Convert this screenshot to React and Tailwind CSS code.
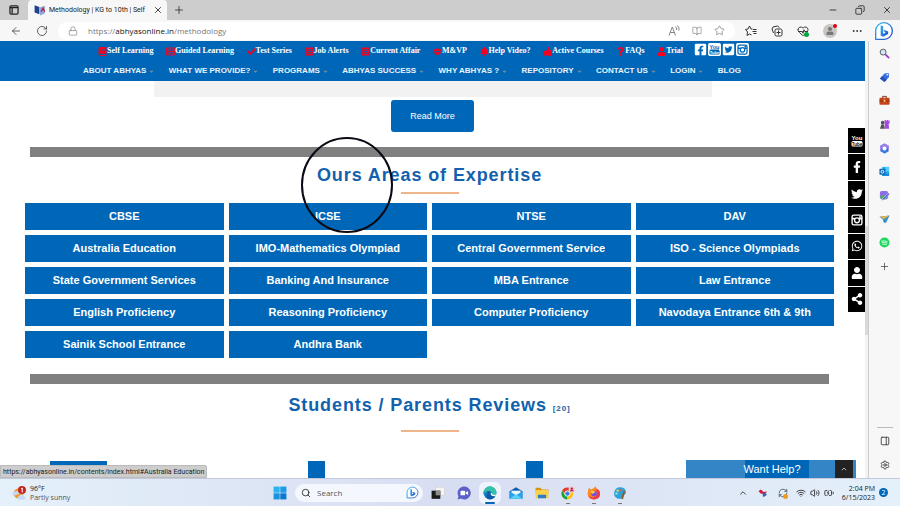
import React from "react";
import {
  FaBook, FaRegListAlt, FaListAlt, FaCheck, FaUsers, FaBell, FaThumbsUp, FaQuestion, FaUser,
  FaFacebookSquare, FaTwitterSquare, FaFacebookF, FaTwitter, FaWhatsapp, FaShareAlt, FaCaretDown,
} from "react-icons/fa";
import {
  ArrowLeft, RotateCw, Lock, X, Plus, Minus, Copy, Star, Ellipsis, ChevronUp, Wifi, Volume2,
  BatteryCharging, Search, Settings, PanelRight, BookOpen, HeartPulse, RefreshCw,
} from "lucide-react";

const ui = "font-['Open_Sans','Noto_Sans',sans-serif]";
const arial = "font-['Liberation_Sans',Arial,sans-serif]";

const topLinks = [
  ["Self Learning", FaBook], ["Guided Learning", FaRegListAlt], ["Test Series", FaCheck],
  ["Job Alerts", FaListAlt], ["Current Affair", FaListAlt], ["M&VP", FaUsers],
  ["Help Video?", FaBell], ["Active Courses", FaThumbsUp], ["FAQs", FaQuestion], ["Trial", FaUser],
];

const menu = [
  "ABOUT ABHYAS", "WHAT WE PROVIDE?", "PROGRAMS", "ABHYAS SUCCESS", "WHY ABHYAS ?",
  "REPOSITORY", "CONTACT US", "LOGIN", "BLOG",
];

const areas = [
  "CBSE", "ICSE", "NTSE", "DAV",
  "Australia Education", "IMO-Mathematics Olympiad", "Central Government Service", "ISO - Science Olympiads",
  "State Government Services", "Banking And Insurance", "MBA Entrance", "Law Entrance",
  "English Proficiency", "Reasoning Proficiency", "Computer Proficiency", "Navodaya Entrance 6th & 9th",
  "Sainik School Entrance", "Andhra Bank",
];

function YouTubeStack({ className, ink = "fill-black" }) {
  return (
    <svg viewBox="0 0 24 24" className={`${className} font-['Liberation_Sans_Narrow','Liberation_Sans',sans-serif] font-bold`} fill="currentColor" textAnchor="middle" aria-hidden="true">
      <text x="12" y="10" fontSize="12">You</text>
      <rect x="1" y="12" width="22" height="11" rx="3" />
      <text x="12" y="21" fontSize="9" className={ink}>Tube</text>
    </svg>
  );
}

function Camera({ className }) {
  return (
    <svg viewBox="1 1 22 22" className={className} fill="none" stroke="currentColor" aria-hidden="true">
      <rect x="3" y="3" width="18" height="18" rx="3" strokeWidth="2.500" />
      <circle cx="12" cy="12.500" r="4.500" strokeWidth="2.500" />
      <path d="M3 9.500h5M16 9.500h5" strokeWidth="3" />
      <rect x="16" y="5" width="3" height="3" fill="currentColor" stroke="none" />
    </svg>
  );
}

function Bing({ className }) {
  return (
    <svg viewBox="0 0 24 24" className={className} aria-hidden="true">
      <defs>
        <linearGradient id="bing" x1="0" y1="0" x2="1" y2="1">
          <stop offset="0" stopColor="#35b5ee" />
          <stop offset="1" stopColor="#1b48c7" />
        </linearGradient>
      </defs>
      <path d="M2 22V12A10 10 0 1 1 12 22z" fill="#fff" stroke="url(#bing)" strokeWidth="1.600" strokeLinejoin="round" />
      <path d="M8 5l3 1.300v9.200l3-1.700-1.600-.8-1-2.500 5.600 2v3.200L11 19l-3-1.700z" fill="url(#bing)" />
    </svg>
  );
}

function SideIcon({ kind }) {
  const art = {
    search: <><path d="M14 14l7 7" stroke="#a33ad0" strokeWidth="4" strokeLinecap="round" /><circle cx="9" cy="9" r="6.500" fill="#cfe6f5" stroke="#555" strokeWidth="2" /></>,
    tag: <><path d="M12 3l9-1 1 9-10 11L2 14z" fill="#3a6fe0" /><path d="M2 14l5-5 10 8-5 5z" fill="#2450b8" /><circle cx="18" cy="6" r="1.800" fill="#fff" /></>,
    case: <><path d="M8 7V3h8v4" fill="none" stroke="#6b2f14" strokeWidth="2" /><rect x="1" y="6" width="22" height="15" rx="2" fill="#c4441c" /><path d="M1 12h22v2H1z" fill="#8b2b10" /><rect x="10" y="10" width="4" height="5" fill="#f5c070" /></>,
    games: <><circle cx="8" cy="8" r="4" fill="#555" /><path d="M5 12h6l2 9H2z" fill="#555" /><path d="M12 2h3v2h2V2h3v2h2V2h1v7l-2 2 1 10h-9z" fill="#a34be0" /></>,
    office: <><path d="M12 1l9 5v12l-9 5-9-5V6z" fill="#5a5fe0" /><path d="M12 1l9 5v6l-9-4-9 6V6z" fill="#9a7ff0" /><path d="M3 14l9 9 9-5-8-2z" fill="#2c8be0" /><circle cx="12" cy="12" r="4.500" fill="#fff" /></>,
    outlook: <><path d="M7 2h15v19H7z" fill="#28a8ea" /><path d="M14 2h8v10h-8z" fill="#50d0ff" /><path d="M7 14l8 4 7-4v8H7z" fill="#1490df" /><rect x="1" y="6" width="13" height="13" rx="1" fill="#0f6cbd" /><circle cx="7.500" cy="12.500" r="3" fill="none" stroke="#fff" strokeWidth="2" /></>,
    image: <><rect x="2" y="2" width="18" height="18" rx="4" fill="#8f6be8" /><path d="M2 16l8-7 7 11H5z" fill="#4ab54a" /><path d="M21 6l2 3-12 12-5 2 2-5z" fill="#4e67d8" stroke="#f7f7f7" /></>,
    send: <><path d="M1 6l22-3-8 17-4-6z" fill="#2f95dc" /><path d="M1 6l22-3-12 8z" fill="#efb13c" /><path d="M9 12l2 8 3-4z" fill="#176bb0" /></>,
    spotify: <><circle cx="12" cy="12" r="11" fill="#1ed760" /><path d="M6 9c4-1 9-.5 12 1.500M7 12.500c4-1 7-.3 10 1M8 16c3-.7 6-.2 8 .8" fill="none" stroke="#fff" strokeWidth="1.800" strokeLinecap="round" /></>,
  }[kind];
  return <svg viewBox="0 0 24 24" className="size-[11px]" fill="none" aria-hidden="true">{art}</svg>;
}

function TaskIcon({ kind }) {
  const art = {
    windows: <><path d="M1 1h10.500v10.500H1z" fill="#2bb3ee" /><path d="M12.500 1H23v10.500H12.500z" fill="#1c9be6" /><path d="M1 12.500h10.500V23H1z" fill="#1793e0" /><path d="M12.500 12.500H23V23H12.500z" fill="#0a78d1" /></>,
    desk: <><rect x="8" y="2" width="15" height="14" fill="#f5f5f5" stroke="#ccc" /><rect x="1" y="8" width="15" height="14" fill="#1b1b1b" /><path d="M8 8h8v8H8z" fill="#8d8d8d" /></>,
    chat: <><path d="M12 1a11 11 0 1 1-5 20.500L1 23l1.500-5.500A11 11 0 0 1 12 1z" fill="#5b5fc7" /><rect x="6" y="8" width="8" height="8" rx="1.500" fill="#fff" /><path d="M15 11l4-2.500v7L15 13z" fill="#fff" /></>,
    edge: <><circle cx="12" cy="12" r="11" fill="#1576c8" /><path d="M1 12A11 11 0 0 1 23 11c0 4-3 5.500-6 5.500-2 0-3-1-2-2.500 1-2-.5-5-4-5S3 11 1 14z" fill="#35c1a8" /><path d="M1 12c2-5 13-5 13 1-1 2 0 4 5 3.500l3-1.500C20 20 15 24 10 22.500c-6-2-5-9 0-11C6 8 2 9 1 14z" fill="#0c59a4" /><path d="M14 12c0 3 2 4.500 5 4.500l3-1.200" fill="none" stroke="#fff" strokeWidth="2" /></>,
    mail: <><path d="M1 9l11-7 11 7v13H1z" fill="#0f5ea8" /><path d="M4 8h16v8H4z" fill="#e9f6ff" /><path d="M1 9l11 7 11-7v13H1z" fill="#28a3e8" /><path d="M1 22l11-8 11 8z" fill="#5fd0fa" /></>,
    folder: <><path d="M1 3h8l3 3h11v6H1z" fill="#d9940f" /><rect x="1" y="7" width="22" height="14" rx="1" fill="#fbd04b" /><path d="M5 15h14v6H5z" fill="#2a7fc9" /></>,
    chrome: <><circle cx="11" cy="13" r="10" fill="#fbc116" /><path d="M2 8a10 10 0 0 1 18 0h-9a5 5 0 0 0-5 5z" fill="#e33b2e" /><path d="M2 8l5 8 4 2-1 5A10 10 0 0 1 2 8z" fill="#1fa34a" /><circle cx="11" cy="13" r="4.500" fill="#3b7ded" stroke="#fff" strokeWidth="1.500" /><circle cx="18.500" cy="6" r="5.500" fill="#f4c8d4" /><circle cx="18.500" cy="4.500" r="2" fill="#9b1f45" /><path d="M15 9c0-3 7-3 7 0z" fill="#9b1f45" /></>,
    firefox: <><path d="M12 3c2-1 2-2 3-2 0 3 3 4 5 6 6 8 0 16-8 16S-1 17 2 8c0-2 1-4 2-5l2 3c2-1 4-1 6-3z" fill="#ff8a1e" /><path d="M20 7c6 8 0 16-8 16-5 0-9-3-10-7 4 5 14 5 15-2 1-4-2-6-2-9z" fill="#f0384b" /><circle cx="12" cy="13" r="5" fill="#7c4be0" /><path d="M6 9c4-2 7 0 8 2-3 0-3 3-6 2z" fill="#ffd23e" /></>,
    paint: <><path d="M12 2c7 0 11 4 10 10-1 4-5 2-6 5s0 5-4 5C5 22 1 17 2 11s5-9 10-9z" fill="#2ea3d8" /><circle cx="8" cy="8" r="2" fill="#f5d33c" /><circle cx="14" cy="7" r="2" fill="#ef5c4a" /><circle cx="6" cy="13" r="2" fill="#8fe0ff" /><path d="M18 8l3 1-4 14-3-2z" fill="#8a5a35" /></>,
  }[kind];
  return <svg viewBox="0 0 24 24" className="size-3.5" fill="none" aria-hidden="true">{art}</svg>;
}

function TabBar() {
  return (
    <div className="flex h-5 shrink-0 items-stretch bg-[#cdcdcd] text-[#222]">
      <div className="flex w-7 items-center justify-center">
        <svg viewBox="0 0 16 16" className="size-2.5" fill="none" stroke="#222" strokeWidth="2" aria-hidden="true"><rect x="1.500" y="1.500" width="13" height="13" rx="2" /><path d="M1.500 4h13M5 4v10" /></svg>
      </div>
      <div className="flex items-center rounded-t bg-[#f7f7f7] px-1">
        <svg viewBox="0 0 20 18" className="mx-0.5 size-3 shrink-0" aria-hidden="true"><path d="M1 1l8 3v12l-8-3z" fill="#203f8f" /><path d="M10 5l8-3v13l-8 3z" fill="#90a6d5" /><path d="M12 12l3-6 3 6" stroke="#b02340" strokeWidth="2" fill="none" /></svg>
        <span className="ml-px w-[104px] font-['Roboto',sans-serif] text-[7px] whitespace-nowrap text-[#222]">Methodology | KG to 10th | Self</span>
        <button aria-label="Close tab"><X className="size-2.5" /></button>
      </div>
      <button aria-label="New tab" className="ml-1.5"><Plus className="size-3" strokeWidth={1.5} /></button>
      <div className="ml-auto flex items-center gap-[17px] pr-2">
        <button aria-label="Minimize"><Minus className="size-2.5" /></button>
        <button aria-label="Restore"><Copy className="size-2.5 -scale-x-100" /></button>
        <button aria-label="Close"><X className="size-2.5" /></button>
      </div>
    </div>
  );
}

function AddressBar() {
  return (
    <div className="flex h-[21px] shrink-0 items-center bg-[#f7f7f7] text-[#333]">
      <button aria-label="Back" className="ml-2.5"><ArrowLeft className="size-3" strokeWidth={1.5} /></button>
      <button aria-label="Refresh" className="ml-3.5"><RotateCw className="size-3" strokeWidth={1.5} /></button>
      <div className="ml-2.5 flex h-[18px] flex-1 items-center rounded-full bg-white pr-2.5 pl-2.5 text-[#777]">
        <Lock className="size-2.5" strokeWidth={1.5} />
        <div className="ml-2.5 flex-1 text-[8px] whitespace-nowrap">https://<span className="text-[#111]">abhyasonline.in</span>/methodology</div>
        <div className="flex items-center gap-3">
          <button aria-label="Read aloud" className="flex"><svg viewBox="0 0 24 24" className="size-3" fill="none" stroke="currentColor" strokeWidth="1.800" aria-hidden="true"><path d="M2 21L8.500 4 15 21M4.500 15h8M15 3q3 3 2 7M19 1q4 4 3 10" /></svg></button>
          <button aria-label="Immersive reader"><BookOpen className="size-2.5" strokeWidth={1.5} /></button>
          <button aria-label="Add to favorites"><Star className="size-[11px]" strokeWidth={1.5} /></button>
        </div>
      </div>
      <div className="flex items-center gap-3.5 pr-[5px] pl-2.5">
        <button aria-label="Favorites" className="flex w-3"><svg viewBox="0 0 24 24" className="size-3" fill="none" stroke="currentColor" strokeWidth="2" aria-hidden="true"><path d="M15 8l-3 0-3-6-3 6-5 1 4 5-1 7 5-3 4 2M16 9h7M15 13h8M17 17h6" /></svg></button>
        <button aria-label="Collections" className="flex w-3"><svg viewBox="0 0 24 24" className="size-3" fill="none" stroke="currentColor" strokeWidth="2" aria-hidden="true"><rect x="8" y="8" width="14" height="14" rx="3" /><path d="M15 11v8M11 15h8M5 16l-3-8 2-4 9-2 4 3" /></svg></button>
        <button aria-label="Browser essentials" className="relative flex w-3"><HeartPulse className="size-3" /><span className="absolute right-0 bottom-0 size-[5px] rounded-full bg-green-600" /></button>
        <button aria-label="Profile" className="relative flex size-3.5 items-center justify-center rounded-full bg-[#c9c5c2]"><FaUser className="size-2 text-[#777]" /><span className="absolute top-0 right-0 size-1 rounded-full bg-red-600" /></button>
        <button aria-label="More"><Ellipsis className="size-3" /></button>
      </div>
      <div className="flex w-8 items-center justify-center"><Bing className="size-5" /></div>
    </div>
  );
}

function SiteHeader() {
  return (
    <header className="flex h-10 shrink-0 flex-col bg-[#0067b8] text-white">
      <div className="flex h-5 items-center pr-[116px] pl-[98px]">
        <nav className="flex flex-1 items-center justify-between font-['Liberation_Serif',serif] text-[8px] font-bold">
          {topLinks.map(([label, Icon]) => (
            <a key={label} href="#top" className="flex items-center whitespace-nowrap"><Icon className="size-[9px] text-[#f5001d]" />{label}</a>
          ))}
        </nav>
        <div className="-mt-1 ml-[11px] flex items-center gap-px">
          <a href="#facebook" aria-label="Facebook"><FaFacebookSquare className="size-[13px]" /></a>
          <a href="#youtube" aria-label="YouTube" className="rounded-xs bg-white p-px text-[#0067b8]"><YouTubeStack className="size-[11px]" ink="fill-white" /></a>
          <a href="#twitter" aria-label="Twitter"><FaTwitterSquare className="size-[13px]" /></a>
          <a href="#instagram" aria-label="Instagram" className="rounded-xs bg-white p-px text-[#0067b8]"><Camera className="size-[11px]" /></a>
        </div>
      </div>
      <nav className={`${arial} flex h-5 items-center justify-between pr-[124px] pl-[83px] text-[8px] font-bold text-[#eaf3fa]`}>
        {menu.map((m) => (
          <a key={m} href="#menu" className="flex items-center gap-0.5 whitespace-nowrap">{m}{m !== "BLOG" && <FaCaretDown className="size-[7px] text-[#7a8894]" />}</a>
        ))}
      </nav>
    </header>
  );
}

function SectionHeading({ children }) {
  return <h2 className="text-center text-lg leading-6 font-bold tracking-wider text-[#1261ad]">{children}</h2>;
}

function PageContent() {
  return (
    <div className={`${arial} flex flex-col`}>
      <div className="mr-[153px] ml-[154px] h-4 bg-[#f2f2f2]" />
      <button className="mt-[3px] self-center rounded-[3px] bg-[#0067b8] px-[19px] py-2.5 text-[9px] leading-3 text-white">Read More</button>
      <section className="mt-[15px] mr-[31px] ml-[25px]">
        <div className="mx-[5px] h-2.5 bg-[#808080]" />
        <div className="mt-1.5"><SectionHeading>Ours Areas of Expertise</SectionHeading></div>
        <div className="mx-auto mt-[5px] h-0.5 w-[58px] bg-[#f0b48a]" />
        <div className="mt-[9px] grid grid-cols-4 gap-[5px]">
          {areas.map((a) => (
            <a key={a} href="#area" className="bg-[#0067b8] py-1.5 text-center text-[11px] leading-[15px] font-bold text-white">{a}</a>
          ))}
        </div>
      </section>
      <section className="mt-4 mr-[31px] ml-[25px]">
        <div className="mx-[5px] h-2.5 bg-[#808080]" />
        <div className="mt-[9px]"><SectionHeading>Students / Parents Reviews <span className="text-[8px]">[20]</span></SectionHeading></div>
        <div className="mx-auto mt-[9px] h-0.5 w-[58px] bg-[#f0b48a]" />
        <div className="mt-[29px] ml-[25px] flex gap-[201px]">
          <div className="h-10 w-[57px] bg-[#0067b8]" />
          <div className="h-10 w-[17px] bg-[#0067b8]" />
          <div className="h-10 w-[17px] bg-[#0067b8]" />
        </div>
      </section>
    </div>
  );
}

const social = [
  ["YouTube", YouTubeStack], ["Facebook", FaFacebookF], ["Twitter", FaTwitter], ["Instagram", Camera],
  ["WhatsApp", FaWhatsapp], ["Account", FaUser], ["Share", FaShareAlt],
];

function Overlays() {
  return (
    <>
      <svg viewBox="0 0 92 96" className="pointer-events-none absolute top-24 left-[301px] h-24 w-[92px]" fill="none" stroke="#0a0a14" strokeWidth="2" aria-hidden="true"><ellipse cx="46" cy="48" rx="45" ry="47" /></svg>
      <div className="absolute top-[87px] right-0 flex h-[184px] w-[17px] flex-col gap-px">
        {social.map(([name, Icon]) => (
          <a key={name} href="#social" aria-label={name} className="flex flex-1 items-center justify-center bg-black text-white"><Icon className="size-3" /></a>
        ))}
      </div>
      <div className={`${arial} absolute right-[9px] bottom-0 flex h-[18px] w-[170px] items-stretch bg-[#3385c6] text-[11px] text-white`}>
        <button className="mr-[47px] ml-auto w-16 bg-[#0067b8] whitespace-nowrap"><span className="-ml-2.5">Want Help?</span></button>
      </div>
      <button aria-label="Back to top" className="absolute right-3 bottom-0 flex h-[18px] w-[18px] items-center justify-center bg-[#222] text-white"><ChevronUp className="size-2" /></button>
      <div className="absolute bottom-0 left-0 h-[13px] rounded-tr-xs border border-[#bbb] bg-[#cdcdcd] px-0.5 font-['Roboto',sans-serif] text-[7px] leading-3 whitespace-nowrap text-[#222]">https://abhyasonline.in/contents/index.html#Australia Education</div>
    </>
  );
}

function Sidebar() {
  return (
    <aside className="flex w-8 shrink-0 flex-col items-center border-l border-[#ccc] bg-[#f7f7f7] pt-[7px] pb-2 text-[#333]">
      <div className="flex h-[224px] flex-col items-center justify-between">
        {["search", "tag", "case", "games", "office", "outlook", "image", "send", "spotify"].map((k) => (
          <button key={k} aria-label={k} className="flex"><SideIcon kind={k} /></button>
        ))}
        <button aria-label="Customize" className="flex"><Plus className="size-[11px]" strokeWidth={1.5} /></button>
      </div>
      <div className="mt-auto flex flex-col items-center gap-3.5">
        <div className="-mb-1.5 h-px w-4 bg-[#bbb]" />
        <button aria-label="Toggle sidebar"><PanelRight className="size-2.5" /></button>
        <button aria-label="Settings"><Settings className="size-2.5" /></button>
      </div>
    </aside>
  );
}

function Taskbar() {
  return (
    <footer className="flex h-7 shrink-0 items-center border-t border-[#c3c9da] bg-gradient-to-r from-[#e4f0fa] via-[#d8def2] to-[#e4f0fa] text-[7px] leading-[9px] text-[#222]">
      <div className="flex flex-1 items-center gap-1 pl-3">
        <svg viewBox="0 0 28 28" className="size-3.5" aria-hidden="true"><circle cx="13" cy="15" r="10" fill="#f49a2a" /><path d="M3 20a5 5 0 0 1 4-9 6 6 0 0 1 9 4zM13 27a5 5 0 0 1 2-8 5 5 0 0 1 9 2 3 3 0 0 1 0 6z" fill="#c5daf5" /><circle cx="20" cy="8" r="8" fill="#c4261d" /><path d="M18 6l2.500-2v9" stroke="#fff" strokeWidth="2" fill="none" /></svg>
        <div><div>96°F</div><div className="text-[#555]">Partly sunny</div></div>
      </div>
      <div className="flex items-center gap-3">
        <button aria-label="Start"><TaskIcon kind="windows" /></button>
        <label className="-ml-1 flex h-[18px] w-32 items-center gap-1.5 rounded-full bg-[#f4f7fd] pr-1 pl-1.5">
          <Search className="size-2.5" />
          <input aria-label="Search" placeholder="Search" className="min-w-0 flex-1 text-[8px] outline-none placeholder:text-[#555]" />
          <Bing className="size-[13px]" />
        </label>
        <div className="-ml-1 flex items-center gap-3">
          {["desk", "chat", "edge", "mail", "folder", "chrome", "firefox", "paint"].map((k) => (
            <button key={k} aria-label={k} className={k === "edge" ? "relative flex rounded-xs bg-[#eff3fb] outline-4 outline-[#eff3fb]" : "relative flex"}>
              <TaskIcon kind={k} />
              {k === "edge" && <span className="absolute -bottom-1 left-0.5 h-0.5 w-2.5 rounded-full bg-[#0067b8]" />}
              {["chrome", "firefox", "paint"].includes(k) && <span className="absolute -bottom-1 left-[5px] h-px w-1 bg-[#777]" />}
            </button>
          ))}
        </div>
      </div>
      <div className="flex flex-1 items-center justify-end pr-3">
        <button aria-label="Show hidden icons"><ChevronUp className="size-2.5" /></button>
        <svg viewBox="0 0 20 20" className="ml-2.5 size-2.5" aria-hidden="true"><path d="M1 6l5-3 5 5 7-1-4 5-9-1z" fill="#d21c35" /><path d="M9 9l9 3-3 4-5 2z" fill="#3b5fb4" /></svg>
        <span className="relative ml-2.5 flex"><RefreshCw className="size-2.5 text-[#456]" /><span className="absolute right-0 -bottom-px size-[5px] rounded-full bg-[#f09a1c]" /></span>
        <Wifi className="ml-2 size-2.5" />
        <Volume2 className="ml-1 size-2.5" />
        <BatteryCharging className="ml-1 size-2.5" />
        <div className="ml-2 text-right"><div>2:04 PM</div><div>6/15/2023</div></div>
        <span className="ml-1 flex size-[9px] items-center justify-center rounded-full bg-[#0067b8] text-white">2</span>
      </div>
    </footer>
  );
}

export default function App() {
  return (
    <div className={`${ui} flex h-screen flex-col overflow-hidden bg-white`}>
      <TabBar />
      <AddressBar />
      <div className="flex min-h-0 flex-1">
        <main className="relative min-w-0 flex-1 overflow-hidden">
          <SiteHeader />
          <PageContent />
          <Overlays />
        </main>
        <div className="w-[3px] shrink-0 bg-[#f3f3f3] pt-[185px]"><div className="h-[109px] bg-[#d9d9d9]" /></div>
        <Sidebar />
      </div>
      <Taskbar />
    </div>
  );
}
